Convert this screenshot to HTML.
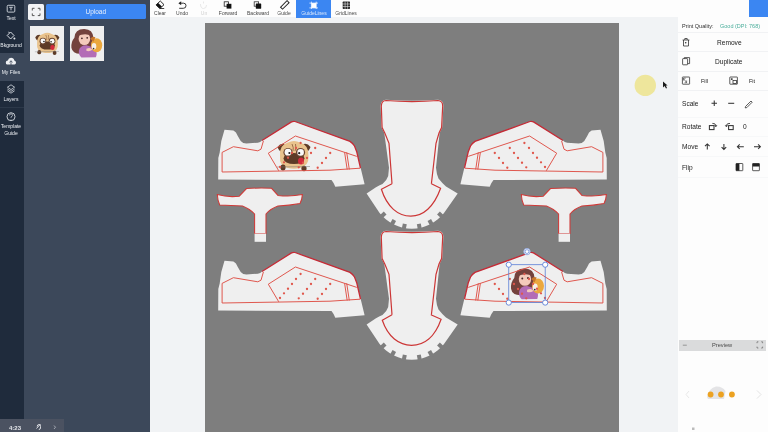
<!DOCTYPE html>
<html><head><meta charset="utf-8">
<style>
*{margin:0;padding:0;box-sizing:border-box}
html,body{width:768px;height:432px;overflow:hidden;background:#f1f3f5;font-family:"Liberation Sans",sans-serif}
.abs{position:absolute}
#side{left:0;top:0;width:24px;height:432px;background:#1f2b3c}
#panel{left:24px;top:0;width:126px;height:432px;background:#3c485a}
#tool{left:150px;top:0;width:618px;height:17px;background:#fdfdfd}
#right{left:678px;top:17px;width:90px;height:415px;background:#fdfdfd}
svg.full{position:absolute;left:0;top:0}
body>div{will-change:transform}
.lbl{position:absolute;font-size:5px;line-height:5px;white-space:nowrap;transform:translateX(-50%);text-align:center}
.sl{color:#eef1f5}
.tl{color:#444}
.rp{position:absolute;font-size:6.6px;line-height:6px;margin-top:0.7px;color:#222;white-space:nowrap}
</style></head><body>
<div id="side" class="abs"></div>
<div id="panel" class="abs"></div>
<div class="abs" style="left:0;top:53px;width:24px;height:27.5px;background:#3c485a"></div>
<div class="abs" style="left:0;top:107.2px;width:24px;height:0.6px;background:#2c3849"></div>
<div id="tool" class="abs"></div>
<div class="abs" style="left:296px;top:0;width:35px;height:17.5px;background:#3b86f2"></div>
<div class="abs" style="left:749px;top:0;width:19px;height:17px;background:#3b86f2"></div>
<div id="right" class="abs"></div>
<!-- upload -->
<div class="abs" style="left:28px;top:4px;width:16px;height:15.5px;background:#f2f3f5;border-radius:1.5px"></div>
<div class="abs" style="left:45.5px;top:4px;width:99.5px;height:15px;background:#3b86f2;border-radius:1.5px"></div>
<div class="abs" style="left:45.5px;top:8px;width:99.5px;font-size:6.5px;line-height:7px;color:#e8f0fd;text-align:center">Upload</div>
<div class="abs" style="left:30px;top:26px;width:34px;height:34.5px;background:#efefef"></div>
<div class="abs" style="left:69.5px;top:26px;width:34px;height:34.5px;background:#efefef"></div>
<!-- sidebar labels -->
<div class="lbl sl" style="left:11px;top:16px">Text</div>
<div class="lbl sl" style="left:11px;top:43px">Bkground</div>
<div class="lbl sl" style="left:11px;top:70px">My Files</div>
<div class="lbl sl" style="left:11px;top:97px">Layers</div>
<div class="lbl sl" style="left:11px;top:124px">Template</div>
<div class="lbl sl" style="left:11px;top:130.5px">Guide</div>
<div class="abs" style="left:0;top:419px;width:63.5px;height:13px;background:#4b5261"></div>
<div class="abs" style="left:9px;top:425px;font-size:6px;line-height:6px;color:#e6e8ec;font-weight:bold">4:23</div>
<!-- toolbar labels -->
<div class="lbl tl" style="left:160.3px;top:11px">Clear</div>
<div class="lbl tl" style="left:181.6px;top:11px">Undo</div>
<div class="lbl" style="left:204.4px;top:11px;color:#d0d0d0">Un</div>
<div class="lbl tl" style="left:227.5px;top:11px">Forward</div>
<div class="lbl tl" style="left:257.5px;top:11px">Backward</div>
<div class="lbl tl" style="left:284.3px;top:11px">Guide</div>
<div class="lbl" style="left:313.5px;top:11px;color:#e0ebfc">GuideLines</div>
<div class="lbl tl" style="left:346.2px;top:11px">GridLines</div>
<!-- right panel -->
<div class="abs" style="left:681.5px;top:22.5px;font-size:5.5px;line-height:6px;color:#2e2e2e;white-space:nowrap">Print Quality:</div>
<div class="abs" style="left:719.7px;top:22.5px;font-size:5.5px;line-height:6px;color:#4aae9b;white-space:nowrap">Good (DPI: 768)</div>
<div class="abs" style="left:678px;top:32px;width:90px;height:0.6px;background:#f1f2f4"></div>
<div class="rp" style="left:717px;top:39.4px">Remove</div>
<div class="abs" style="left:678px;top:51.4px;width:90px;height:0.6px;background:#f1f2f4"></div>
<div class="rp" style="left:714.9px;top:58px">Duplicate</div>
<div class="abs" style="left:678px;top:70.9px;width:90px;height:0.6px;background:#f1f2f4"></div>
<div class="rp" style="left:701px;top:77.8px;font-size:5.5px">Fill</div>
<div class="rp" style="left:749px;top:77.8px;font-size:5.5px">Fit</div>
<div class="abs" style="left:678px;top:90px;width:90px;height:0.6px;background:#f1f2f4"></div>
<div class="rp" style="left:681.5px;top:100.3px">Scale</div>
<div class="abs" style="left:678px;top:116.5px;width:90px;height:0.5px;background:#f7f8f9"></div>
<div class="rp" style="left:681.5px;top:123.3px">Rotate</div>
<div class="rp" style="left:742.7px;top:123.3px">0</div>
<div class="abs" style="left:678px;top:136px;width:90px;height:0.5px;background:#f7f8f9"></div>
<div class="rp" style="left:681.5px;top:143.7px">Move</div>
<div class="abs" style="left:678px;top:156px;width:90px;height:0.5px;background:#f7f8f9"></div>
<div class="rp" style="left:681.5px;top:164.2px">Flip</div>
<div class="abs" style="left:678px;top:176.5px;width:90px;height:0.5px;background:#f7f8f9"></div>
<div class="abs" style="left:679px;top:339.6px;width:86.8px;height:10.8px;background:#dadbdc"></div>
<div class="abs" style="left:712px;top:342px;font-size:5.7px;line-height:6px;color:#4a4a4a">Preview</div>

<svg class="full" width="768" height="432" viewBox="0 0 768 432">
<defs>
<g id="shoefill">
<path fill="#efefef" d="M224.5,129.7 L233.4,130.5 Q236.5,132 237.5,135.4 L240.7,141 Q243,143.5 246.4,143.5 L257.8,142.7 Q260.5,142.3 262,140.5 L291.5,121.9 Q293.3,121 295,121.5 L350,141.4 Q353,143.5 354.5,146 L356.8,152 L364.6,184.2 L335.3,186.8 Q334,183 331.5,180 L218.2,179.6 L218.3,158 L219.7,152.4 L221.3,141 Z"/>
</g>
<g id="shoe">
<path fill="none" stroke="#c62a35" stroke-width="1.3" d="M262,140.5 L291.5,121.9 Q293.3,121 295,121.5 L350,141.4 Q353,143.5 354.5,146 L356.8,152 L360.5,168"/>
<path fill="none" stroke="#de4f46" stroke-width="0.95" d="M263.4,141 L261,149.2 L257.8,150.8 L233.4,146.7 L222.1,152.4 L222.1,172 L330,170.2 L360.3,168.2 M268.3,153.2 L295.4,136 L356.8,156.4 M268.3,153.2 L278.75,170.8 M344.6,152.3 L347.2,169.5 M346.7,152.3 L349.3,169.5"/>
<g fill="#e0574c">
<circle cx="300.6" cy="143" r="1.15"/><circle cx="296" cy="148" r="1.15"/><circle cx="292" cy="153" r="1.15"/><circle cx="288" cy="157.75" r="1.15"/><circle cx="284" cy="162.3" r="1.15"/><circle cx="280" cy="167" r="1.15"/>
<circle cx="315.2" cy="148" r="1.15"/><circle cx="311" cy="153" r="1.15"/><circle cx="307" cy="158" r="1.15"/><circle cx="303" cy="162.75" r="1.15"/><circle cx="298.75" cy="167.3" r="1.15"/>
<circle cx="330.2" cy="153" r="1.15"/><circle cx="326" cy="158" r="1.15"/><circle cx="322" cy="163" r="1.15"/><circle cx="317.7" cy="167.75" r="1.15"/>
</g>
</g>
<g id="tongue">
<path fill="#efefef" d="M386,99.7 Q412,102 438,99.7 Q443.5,100 443.4,106 L442.2,127.5 L439.6,133 L436,167.8 Q436.5,174 438.5,178.5 Q442,183 446,186.4 L457.7,193.5 L444,213 A40.9,40.9 0 0 1 379.6,213 L366.6,193.5 L376,187.2 Q380,185 382.5,184 Q387,180 388.2,175.9 L389,167.8 L384.3,133 L381.5,127.5 L380.6,106 Q380.8,100 386,99.7 Z"/>
<path fill="none" stroke="#cc3636" stroke-width="1.2" d="M392,183.7 L389,143.4 L384.8,133 L382.1,127.5 L381.3,106 Q381.6,100.6 386,100.5 Q412,102.8 438,100.5 Q442.7,100.8 442.7,106 L441.6,127.5 L439,133 L436,143.4 L431.4,183.7"/>
<g fill="#7e7e7e">
<rect x="-2" y="-4.2" width="4" height="6.2" transform="translate(382.10,215.92) rotate(46.6)"/>
<rect x="-2" y="-4.2" width="4" height="6.2" transform="translate(392.30,223.75) rotate(28.5)"/>
<rect x="-2" y="-4.2" width="4" height="6.2" transform="translate(404.00,227.95) rotate(11.0)"/>
<rect x="-2" y="-4.2" width="4" height="6.2" transform="translate(419.60,227.95) rotate(-11.0)"/>
<rect x="-2" y="-4.2" width="4" height="6.2" transform="translate(431.30,223.75) rotate(-28.5)"/>
<rect x="-2" y="-4.2" width="4" height="6.2" transform="translate(441.50,215.92) rotate(-46.6)"/>
</g>
</g>
<g id="tee">
<path fill="#efefef" stroke="#cf3a38" stroke-width="1.05" d="M217.3,194.6 Q228,197.5 239.2,196.2 L246.5,188.6 Q259,187.6 271.6,188.3 L278,195.4 Q290,197 302.4,194.6 Q302,200 300,203.5 Q289,205.5 278,206 Q270,209 266,214 L266,233.5 L254.6,233.5 L254.6,214 Q250,209 242.4,206 Q230,205.5 219.7,205 Q217.5,200 217.3,194.6 Z"/>
<rect x="254.6" y="233.5" width="11.4" height="8.3" fill="#efefef"/>
</g>

<g id="pug">
<path d="M-16.5,-7 Q-13,-12 -8,-9.5 L-10,-1 Q-15,-2 -16.5,-7 Z" fill="#5d3b27"/>
<path d="M16.5,-7 Q13,-12 8,-9.5 L10,-1 Q15,-2 16.5,-7 Z" fill="#5d3b27"/>
<path d="M-14,2 Q-15,-9 -6,-11.5 Q0,-14.5 6,-11.5 Q15,-9 14.5,2 Q15,12 6,14 Q0,15.5 -6,14 Q-15,12 -14,2 Z" fill="#e9c38d"/>
<ellipse cx="0" cy="4.5" rx="10.5" ry="5.5" fill="#5d3b27"/>
<circle cx="-6" cy="-1.5" r="4.6" fill="#6a4430"/>
<circle cx="6.5" cy="-1.5" r="4.6" fill="#6a4430"/>
<circle cx="-6" cy="-1.8" r="3.4" fill="#fafafa"/>
<circle cx="6.6" cy="-1.6" r="3.3" fill="#fafafa"/>
<circle cx="-4.6" cy="-1" r="1.1" fill="#222"/>
<circle cx="5.2" cy="-0.8" r="1.1" fill="#222"/>
<path d="M-2,-10 Q0,-6 -1,-3 M1.5,-10 Q2.5,-6 1,-3" stroke="#8a5a3a" stroke-width="0.8" fill="none"/>
<ellipse cx="7" cy="7" rx="3" ry="3.6" fill="#d32a3c"/>
<ellipse cx="-11" cy="13.5" rx="2.6" ry="3" fill="#5d3b27"/>
<ellipse cx="10" cy="14.5" rx="2.6" ry="2.8" fill="#5d3b27"/>
<path d="M-17,13 L16,12.5" stroke="#777" stroke-width="0.5"/>
</g>
<g id="girl">
<path d="M5,12 Q5.5,3 15,3.2 Q23.5,3.5 24,12 L23.5,21 Q18,27 11,28 Q3,28 2,22 Q1.5,16 5,12 Z" fill="#74423d"/>
<ellipse cx="15" cy="13" rx="5.8" ry="6.3" fill="#f4cabb"/>
<path d="M8.5,10 Q10,4.5 15.5,4.8 Q21,5 22,10 Q17,7.5 12,9 Z" fill="#74423d"/>
<circle cx="12.5" cy="12.5" r="0.9" fill="#4a2a2a"/>
<circle cx="17.8" cy="12" r="0.9" fill="#4a2a2a"/>
<path d="M9.5,25 Q10.5,19.5 17,19.5 L25,22 Q28.5,27 26.5,31.5 L12,31.8 Q9,29 9.5,25 Z" fill="#b36cb6"/>
<ellipse cx="27.2" cy="19.5" rx="5.6" ry="7" fill="#eba83e"/>
<ellipse cx="24.6" cy="20.5" rx="2.3" ry="3.3" fill="#f6efe6"/>
<path d="M21,13 Q23,10 26,11.5 L24,16 Z" fill="#c9772a"/>
<circle cx="24.2" cy="22.8" r="0.8" fill="#333"/>
<path d="M17,23 Q21,21 23,24 Q20,26 17,25 Z" fill="#f4cabb"/>
</g>
</defs>
<rect x="205" y="23" width="414" height="409" fill="#7e7e7e"/>
<use href="#shoefill"/>
<use href="#shoefill" transform="translate(0,131)"/>
<use href="#shoefill" transform="translate(825,0) scale(-1,1)"/>
<use href="#shoefill" transform="translate(825,131) scale(-1,1)"/>
<use href="#pug" transform="translate(294,154)"/>
<use href="#girl" transform="translate(508.9,265.2) scale(1.07)"/>
<use href="#shoe"/>
<use href="#shoe" transform="translate(0,131)"/>
<use href="#shoe" transform="translate(825,0) scale(-1,1)"/>
<use href="#shoe" transform="translate(825,131) scale(-1,1)"/>
<use href="#tongue"/>
<use href="#tongue" transform="translate(0,131)"/>
<path fill="none" stroke="#cc3636" stroke-width="1.2" d="M392,183.7 L381.4,189.3 C387,207 398,216.1 410.8,216.1 C423,216.1 434,207 440.6,188.3 L431.4,183.7"/>
<path fill="none" stroke="#cc3636" stroke-width="1.2" d="M392,314.7 L382.3,320.3 C388,337 399,345.3 411.5,345.3 C424,345.3 435,337 441.1,319.3 L430.9,314.7"/>
<use href="#tee"/>
<use href="#tee" transform="translate(304,0)"/>

<!-- toolbar icons -->
<g>
<path d="M160.3,1 L164,4.7 L159.8,8.6 L156.1,4.9 Z" fill="none" stroke="#111" stroke-width="0.9"/>
<path d="M158.2,2.9 L161.9,6.6 L159.8,8.6 L156.1,4.9 Z" fill="#111"/>
<path d="M159.8,8.5 L164.2,8.5" stroke="#111" stroke-width="0.8"/>
<path d="M179.8,3.2 L183.6,3.2 Q186,3.2 186,5.7 Q186,8.3 183.3,8.3 L179.2,8.3" fill="none" stroke="#222" stroke-width="0.9"/>
<path d="M181.2,1.2 L178.4,3.2 L181.2,5.2 Z" fill="#222"/>
<path d="M203.5,1.5 L203.5,3.5 M200.5,4 Q200.5,8.5 203.5,8.5 Q206.5,8.5 206.5,5" fill="none" stroke="#e2e2e2" stroke-width="0.8"/>
<rect x="224.2" y="1.8" width="4.4" height="4.4" fill="#fff" stroke="#222" stroke-width="0.8"/>
<rect x="226.6" y="3.8" width="4.8" height="4.8" fill="#111"/>
<rect x="254.2" y="1.8" width="4.4" height="4.4" fill="#fff" stroke="#333" stroke-width="0.8"/>
<rect x="255.8" y="3.6" width="5.4" height="5.1" fill="#111" rx="0.4"/>
<g transform="translate(284.8,4.9) rotate(-45)"><rect x="-4.6" y="-1.4" width="9.2" height="2.8" fill="none" stroke="#222" stroke-width="1"/></g>
<rect x="311.4" y="3.1" width="4.8" height="4.8" fill="#fff"/>
<path d="M311.4,1.6 V9 M316.2,1.6 V9 M309.4,3.1 H318 M309.4,7.9 H318" stroke="#fff" stroke-width="0.7"/>
<rect x="342.7" y="1.6" width="7.3" height="7.3" fill="#2a2a2a" rx="0.6"/>
<path d="M345.1,1.6 V8.9 M347.6,1.6 V8.9 M342.7,4 H350 M342.7,6.5 H350" stroke="#fff" stroke-width="0.5"/>
</g>
<!-- sidebar icons -->
<g fill="none" stroke="#d5dae1" stroke-width="0.9">
<rect x="7.2" y="5.3" width="7.6" height="6.8" rx="1"/>
<path d="M9.2,7.3 H12.8 M11,7.3 V10.3"/>
<path d="M10.6,32 L14,35.5 L10.6,39 L7.2,35.5 Z" stroke-width="1"/><path d="M9.4,33 L8.6,31.8" stroke-width="1"/>
<circle cx="11" cy="116.7" r="4"/>
<path d="M9.5,115.5 Q9.5,113.8 11,113.8 Q12.5,113.8 12.5,115.3 Q12.5,116.4 11,116.9 V117.8" stroke-width="0.7"/>
</g>
<circle cx="14.4" cy="38.5" r="1" fill="#e8ebef"/>
<circle cx="11" cy="119.4" r="0.45" fill="#d5dae1"/>
<path d="M7,64.5 Q5.8,64.5 5.8,62.5 Q5.8,60.5 7.8,60.5 Q8.5,57.8 11,57.8 Q13.8,57.8 14.3,60.5 Q16,60.8 16,62.6 Q16,64.5 14.5,64.5 Z" fill="#eef0f3"/>
<path d="M11,65.8 V60.8 M9.4,62.3 L11,60.8 L12.6,62.3" fill="none" stroke="#3c4759" stroke-width="0.8"/>
<g fill="none" stroke="#d5dae1" stroke-width="0.8">
<path d="M11,84.8 L14.6,87.2 L11,89.6 L7.4,87.2 Z"/>
<path d="M7.4,89 L11,91.4 L14.6,89"/>
<path d="M7.4,90.8 L11,93.2 L14.6,90.8"/>
</g>
<!-- right panel icons -->
<g fill="none" stroke="#333" stroke-width="0.8">
<path d="M682.6,40 H689.4 M683.5,40 V46 H688.5 V40 M684.8,40 V38.5 H687.2 V40"/>
<rect x="682.6" y="58.6" width="5" height="6.2" rx="0.5"/>
<path d="M684.3,58.6 V57.6 H689.6 V63.6 H687.6"/>
<rect x="682.4" y="77" width="7.2" height="7.2" rx="0.4"/>
<rect x="729.8" y="77" width="7.6" height="7.2" rx="0.4"/>
<rect x="733" y="80.4" width="3.6" height="3" />
<path stroke-width="1.05" d="M711.5,103.3 H717 M714.25,100.6 V106"/>
<path stroke-width="1.05" d="M728.2,103.3 H734.2"/>
<path d="M745.6,106.4 L751,101 L752.2,102.2 L746.8,107.6 L745.2,107.9 Z" stroke-width="0.8"/>
<rect x="709.4" y="125.6" width="4.6" height="4" stroke-width="1.05"/>
<path d="M712.4,123.4 Q715.6,123.2 715.8,125.6" stroke-width="0.9"/>
<path d="M714.6,125.4 L715.8,127 L717,125.4 Z" fill="#333" stroke-width="0.4"/>
<rect x="728.6" y="125.6" width="4.6" height="4" stroke-width="1.05"/>
<path d="M730,123.4 Q726.6,123.2 726.4,125.6" stroke-width="0.9"/>
<path d="M725.2,125.4 L726.4,127 L727.6,125.4 Z" fill="#333" stroke-width="0.4"/>
<path stroke-width="1.05" d="M707.3,149.5 V144 M705,146.2 L707.3,143.9 L709.6,146.2"/>
<path stroke-width="1.05" d="M723.9,143.9 V149.4 M721.6,147.1 L723.9,149.4 L726.2,147.1"/>
<path stroke-width="1.05" d="M743.8,146.7 H737.5 M739.7,144.4 L737.4,146.7 L739.7,149"/>
<path stroke-width="1.05" d="M754,146.7 H760.3 M758.1,144.4 L760.4,146.7 L758.1,149"/>
<rect x="736" y="163.5" width="6.8" height="7.2" rx="0.4"/>
<rect x="752.6" y="163.5" width="6.8" height="7.2" rx="0.4"/>
</g>
<circle cx="685.7" cy="42.8" r="0.8" fill="#333"/>
<path d="M683.5,78.5 L686.5,82.5 M683.5,80.5 V78.2 H685.7 M686.6,80.5 V82.7 H684.6" fill="none" stroke="#333" stroke-width="0.6"/>
<rect x="731" y="78.3" width="1.6" height="1.6" fill="#333"/>
<rect x="736" y="163.5" width="3.4" height="7.2" fill="#222"/>
<rect x="752.6" y="163.5" width="6.8" height="3" fill="#222"/>

<use href="#pug" transform="translate(47.3,42.3) scale(0.73)"/>
<use href="#girl" transform="translate(69.4,25.8)"/>
<path d="M32.3,10.5 V8.3 H34.5 M37.8,8.3 H40 V10.5 M40,13.4 V15.6 H37.8 M34.5,15.6 H32.3 V13.4" fill="none" stroke="#444" stroke-width="0.9"/>
<!-- selection -->
<g fill="none" stroke="#5b7fd6">
<rect x="508.75" y="264.7" width="36.45" height="37.9" stroke-width="0.8"/>
</g>
<g fill="#fff" stroke="#5b7fd6" stroke-width="0.9">
<circle cx="508.75" cy="264.7" r="2.6"/><circle cx="545.2" cy="264.7" r="2.6"/>
<circle cx="508.75" cy="302.6" r="2.6"/><circle cx="545.2" cy="302.6" r="2.6"/>
<circle cx="527" cy="251.6" r="3.2" stroke="#9aaee0" stroke-width="1"/><circle cx="527" cy="251.6" r="1.9" stroke-width="0.7"/>
</g>

<!-- preview -->
<path d="M682.8,345.2 H686.8" stroke="#666" stroke-width="0.6"/>
<path d="M757,343.2 V341.8 H758.4 M761.2,341.8 H762.6 V343.2 M762.6,346.6 V348 H761.2 M758.4,348 H757 V346.6" fill="none" stroke="#555" stroke-width="0.6"/>
<path d="M707,397 Q709,388 716,386.5 Q722,386 725.5,391 L724,399 L708,399 Z" fill="#e4e4e6"/>
<circle cx="710.6" cy="394.5" r="2.9" fill="#eca222"/>
<circle cx="721" cy="394.5" r="2.9" fill="#eca222"/>
<circle cx="731.9" cy="394.5" r="2.9" fill="#eca222"/>
<path d="M689,391 L686,394.5 L689,398" fill="none" stroke="#e2e2e2" stroke-width="0.8"/>
<path d="M757,390.5 L761,394.5 L757,398.5" fill="none" stroke="#dcdcdc" stroke-width="0.8"/>
<rect x="692" y="427.5" width="2.5" height="2.5" fill="#bbb"/>
<!-- time box icons -->
<path d="M36.5,428.5 L40.5,424 M37.2,426.5 Q37.2,424.5 39,424.5 Q40.5,424.5 40.5,426.5 L40.5,428 Q40.5,429.5 38.8,429.5" fill="none" stroke="#e6e8ec" stroke-width="0.9"/>
<path d="M54,425.5 L55.5,427.2 L54,429" fill="none" stroke="#c8ccd3" stroke-width="0.7"/>
<!-- yellow circle + cursor -->
<circle cx="645.3" cy="85.4" r="10.7" fill="#eee69c"/>
<path d="M663,81.5 L663,87.5 L664.6,86 L666,88.5 L667,88 L665.8,85.6 L667.6,85.4 Z" fill="#1a1a1a"/>
</svg>
</body></html>
